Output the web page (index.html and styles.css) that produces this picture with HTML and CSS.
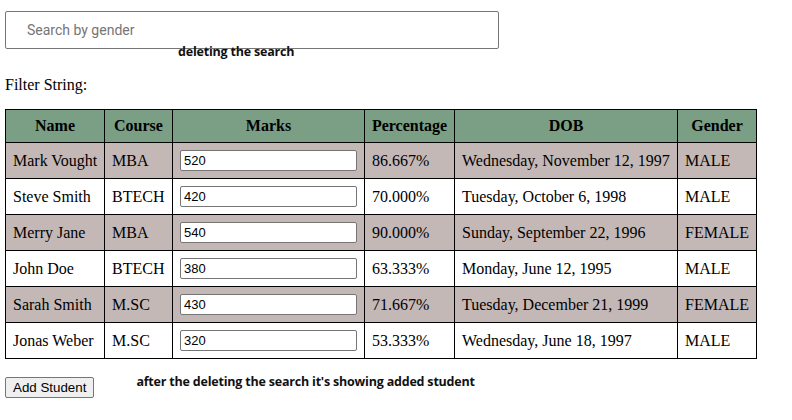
FILE: index.html
```html
<!DOCTYPE html>
<html>
<head>
<meta charset="utf-8">
<link rel="stylesheet" href="styles.css">
</head>
<body>
<div class="page">
  <div class="search-wrap">
    <input class="search" type="text" placeholder="Search by gender">
    <span class="note note-top">deleting the search</span>
  </div>
  <p class="filter">Filter String:</p>
  <table class="grid">
    <thead>
      <tr><th class="c-name">Name</th><th class="c-course">Course</th><th class="c-marks">Marks</th><th class="c-pct">Percentage</th><th class="c-dob">DOB</th><th class="c-gender">Gender</th></tr>
    </thead>
    <tbody>
      <tr class="odd"><td>Mark Vought</td><td>MBA</td><td><input class="mark" value="520"></td><td>86.667%</td><td>Wednesday, November 12, 1997</td><td>MALE</td></tr>
      <tr><td>Steve Smith</td><td>BTECH</td><td><input class="mark" value="420"></td><td>70.000%</td><td>Tuesday, October 6, 1998</td><td>MALE</td></tr>
      <tr class="odd"><td>Merry Jane</td><td>MBA</td><td><input class="mark" value="540"></td><td>90.000%</td><td>Sunday, September 22, 1996</td><td>FEMALE</td></tr>
      <tr><td>John Doe</td><td>BTECH</td><td><input class="mark" value="380"></td><td>63.333%</td><td>Monday, June 12, 1995</td><td>MALE</td></tr>
      <tr class="odd"><td>Sarah Smith</td><td>M.SC</td><td><input class="mark" value="430"></td><td>71.667%</td><td>Tuesday, December 21, 1999</td><td>FEMALE</td></tr>
      <tr><td>Jonas Weber</td><td>M.SC</td><td><input class="mark" value="320"></td><td>53.333%</td><td>Wednesday, June 18, 1997</td><td>MALE</td></tr>
    </tbody>
  </table>
  <div class="actions">
    <button class="add">Add Student</button>
    <span class="note note-bottom">after the deleting the search it's showing added student</span>
  </div>
</div>
</body>
</html>
```
FILE: styles.css
```css
html, body { margin: 0; padding: 0; background: #fff; }
body { font-family: "Liberation Serif", "Times New Roman", serif; font-size: 16px; color: #000; }
.page { padding: 11px 5px 0 5px; }
.search-wrap { position: relative; width: 494px; height: 38px; }
.search {
  box-sizing: border-box; width: 494px; height: 38px; margin: 0;
  border: 1px solid #767676; border-radius: 2px;
  padding: 0 0 0 21px;
  font-family: Roboto, "Liberation Sans", sans-serif; font-size: 14px; color: #000;
}
.search::placeholder { color: #757575; }
.note { font-family: "Open Sans", "Liberation Sans", sans-serif; font-weight: bold; font-size: 12.5px; color: #111; letter-spacing: -0.2px; }
.note-top { position: absolute; left: 173px; top: 32px; }
.filter { margin: 27px 0 0 0; line-height: 18px; }
.grid {
  border-collapse: separate; border-spacing: 0; margin-top: 15px;
  width: 752px; table-layout: fixed;
  border-left: 1px solid #000; border-top: 1px solid #000;
}
.grid th, .grid td {
  box-sizing: border-box;
  border-right: 1px solid #000; border-bottom: 1px solid #000;
  padding: 0 0 0 7px; text-align: left; white-space: nowrap;
}
.c-name { width: 99px; } .c-course { width: 68px; } .c-marks { width: 192px; }
.c-pct { width: 90px; } .c-dob { width: 223px; } .c-gender { width: 79px; }
.grid th { background: #7a9f84; height: 33px; text-align: center; font-weight: bold; padding: 0; }
.grid td { height: 36px; }
.grid tr.odd td { background: #c4b8b7; }
.mark {
  box-sizing: border-box; width: 177px; height: 21px; margin: 0; padding: 0 3px;
  border: 1px solid #767676; border-radius: 2px; background: #fff;
  font-family: "Liberation Sans", Arial, sans-serif; font-size: 13px; color: #000;
  display: block;
}
.actions { display: flex; align-items: flex-start; margin-top: 18px; }
.add {
  height: 21px; padding: 0 7px; margin: 0;
  font-family: "Liberation Sans", Arial, sans-serif; font-size: 13.33px; color: #000;
  background: #efefef; border: 1px solid #767676; border-radius: 2px;
}
.note-bottom { margin-left: 42px; margin-top: -4px; }
```
